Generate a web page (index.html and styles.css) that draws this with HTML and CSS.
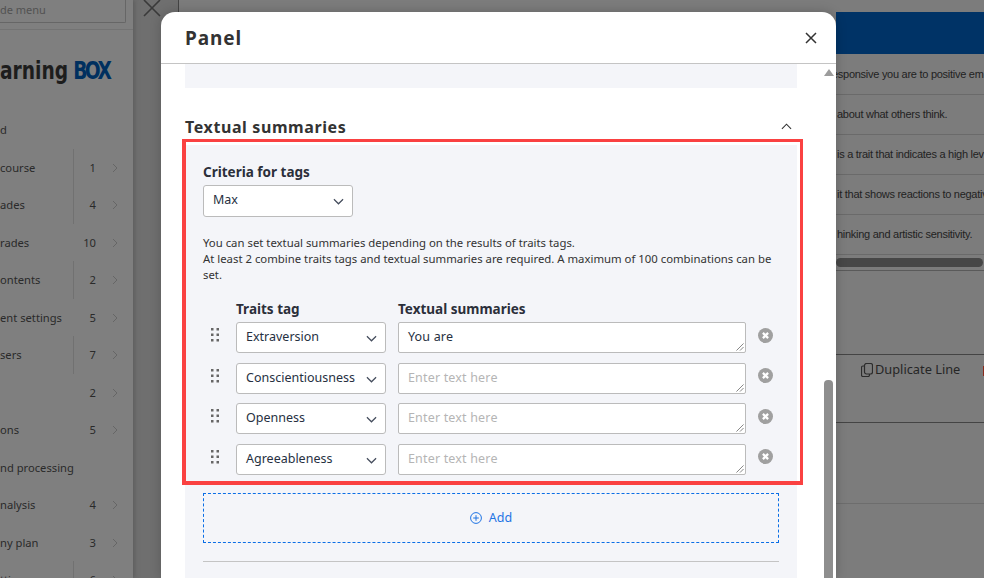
FILE: index.html
```html
<!DOCTYPE html>
<html>

<head>
  <meta charset="utf-8" />
  <title>Panel</title>
  <link rel="stylesheet" href="styles.css">
</head>

<body>
  <div class="page">
    <div class="sidebar">
      <div class="search-wrap">
        <div class="search">de menu</div>
      </div>
      <div class="logo"><div class="logo-text">arning<span class="logo-blue">BOX</span></div></div>
      <div class="nav">
        <div class="nav-row"><div class="nav-label">d</div></div>
        <div class="nav-row line"><div class="nav-label">course</div><div class="nav-count">1</div><svg class="nav-arrow" viewBox="0 0 6 10"><path d="M1 1l4 4-4 4"/></svg></div>
        <div class="nav-row line"><div class="nav-label">ades</div><div class="nav-count">4</div><svg class="nav-arrow" viewBox="0 0 6 10"><path d="M1 1l4 4-4 4"/></svg></div>
        <div class="nav-row"><div class="nav-label">rades</div><div class="nav-count">10</div><svg class="nav-arrow" viewBox="0 0 6 10"><path d="M1 1l4 4-4 4"/></svg></div>
        <div class="nav-row line"><div class="nav-label">ontents</div><div class="nav-count">2</div><svg class="nav-arrow" viewBox="0 0 6 10"><path d="M1 1l4 4-4 4"/></svg></div>
        <div class="nav-row"><div class="nav-label">ent settings</div><div class="nav-count">5</div><svg class="nav-arrow" viewBox="0 0 6 10"><path d="M1 1l4 4-4 4"/></svg></div>
        <div class="nav-row line"><div class="nav-label">sers</div><div class="nav-count">7</div><svg class="nav-arrow" viewBox="0 0 6 10"><path d="M1 1l4 4-4 4"/></svg></div>
        <div class="nav-row"><div class="nav-label"></div><div class="nav-count">2</div><svg class="nav-arrow" viewBox="0 0 6 10"><path d="M1 1l4 4-4 4"/></svg></div>
        <div class="nav-row"><div class="nav-label">ons</div><div class="nav-count">5</div><svg class="nav-arrow" viewBox="0 0 6 10"><path d="M1 1l4 4-4 4"/></svg></div>
        <div class="nav-row"><div class="nav-label">nd processing</div></div>
        <div class="nav-row"><div class="nav-label">nalysis</div><div class="nav-count">4</div><svg class="nav-arrow" viewBox="0 0 6 10"><path d="M1 1l4 4-4 4"/></svg></div>
        <div class="nav-row"><div class="nav-label">ny plan</div><div class="nav-count">3</div><svg class="nav-arrow" viewBox="0 0 6 10"><path d="M1 1l4 4-4 4"/></svg></div>
        <div class="nav-row line"><div class="nav-label">tti</div><div class="nav-count">6</div><svg class="nav-arrow" viewBox="0 0 6 10"><path d="M1 1l4 4-4 4"/></svg></div>
      </div>
    </div>

    <div class="gap">
      <svg class="big-x" viewBox="0 0 20 20"><path d="M2 1l16 16M18 1L2 17"/></svg>
    </div>

    <div class="main">
      <div class="main-inner">
        <div class="main-top"></div>
        <div class="blue-bar"></div>
        <div class="trait-rows">
          <div class="trait-row clip-e">esponsive you are to positive em</div>
          <div class="trait-row">about what others think.</div>
          <div class="trait-row">is a trait that indicates a high lev</div>
          <div class="trait-row">it that shows reactions to negativ</div>
          <div class="trait-row">hinking and artistic sensitivity.</div>
        </div>
        <div class="h-scroll"><div class="h-thumb"></div></div>
        <div class="spacer"></div>
        <div class="actions-row">
          <svg class="dup-icon" viewBox="0 0 12 14"><path d="M3.500 3H2a1.500 1.500 0 0 0-1.500 1.500V12A1.500 1.500 0 0 0 2 13.500h5A1.500 1.500 0 0 0 8.500 12v-1"/><rect x="3.500" y="0.500" width="8" height="10.500" rx="2"/></svg>
          <span class="dup-text">Duplicate Line</span>
          <svg class="trash-icon" viewBox="0 0 10 14"><path d="M1 3h8v10H1z"/></svg>
        </div>
        <div class="empty-row"></div>
      </div>
    </div>
  </div>

  <div class="modal">
    <div class="modal-head">
      <div class="modal-title">Panel</div>
      <svg class="modal-close" viewBox="0 0 12 12"><path d="M1 1l10 10M11 1L1 11"/></svg>
    </div>
    <div class="modal-body">
      <div class="modal-scroll">
        <div class="top-block"></div>
        <div class="section-head">
          <h2>Textual summaries</h2>
          <svg class="collapse" viewBox="0 0 12 7"><path d="M1 6l5-5 5 5"/></svg>
        </div>
        <div class="gray-block">
          <div class="field-label">Criteria for tags</div>
          <div class="select select-criteria">Max<svg class="caret" viewBox="0 0 12 7"><path d="M1 1l5 5 5-5"/></svg></div>
          <p class="help">You can set textual summaries depending on the results of traits tags.<br>At least 2 combine traits tags and textual summaries are required. A maximum of 100 combinations can be set.</p>
          <div class="tags-grid">
            <div></div>
            <div class="col-head">Traits tag</div>
            <div class="col-head col-text">Textual summaries</div>
            <div></div>

            <svg class="drag" viewBox="0 0 8 14"><path d="M0 0h2.500v2.500H0zM5.500 0H8v2.500H5.500zM0 5.500h2.500V8H0zM5.500 5.500H8V8H5.500zM0 11h2.500v2.500H0zM5.500 11H8v2.500H5.500z"/></svg>
            <div class="select">Extraversion<svg class="caret" viewBox="0 0 12 7"><path d="M1 1l5 5 5-5"/></svg></div>
            <div class="textarea">You are<svg class="grip" viewBox="0 0 9 9"><path d="M8.500 .5l-8 8M8.500 4.500l-4 4"/></svg></div>
            <svg class="remove" viewBox="0 0 16 16"><circle cx="8" cy="8" r="8"/><path d="M5.200 5.200l5.600 5.600M10.800 5.200l-5.600 5.600"/></svg>

            <svg class="drag" viewBox="0 0 8 14"><path d="M0 0h2.500v2.500H0zM5.500 0H8v2.500H5.500zM0 5.500h2.500V8H0zM5.500 5.500H8V8H5.500zM0 11h2.500v2.500H0zM5.500 11H8v2.500H5.500z"/></svg>
            <div class="select">Conscientiousness<svg class="caret" viewBox="0 0 12 7"><path d="M1 1l5 5 5-5"/></svg></div>
            <div class="textarea empty">Enter text here<svg class="grip" viewBox="0 0 9 9"><path d="M8.500 .5l-8 8M8.500 4.500l-4 4"/></svg></div>
            <svg class="remove" viewBox="0 0 16 16"><circle cx="8" cy="8" r="8"/><path d="M5.200 5.200l5.600 5.600M10.800 5.200l-5.600 5.600"/></svg>

            <svg class="drag" viewBox="0 0 8 14"><path d="M0 0h2.500v2.500H0zM5.500 0H8v2.500H5.500zM0 5.500h2.500V8H0zM5.500 5.500H8V8H5.500zM0 11h2.500v2.500H0zM5.500 11H8v2.500H5.500z"/></svg>
            <div class="select">Openness<svg class="caret" viewBox="0 0 12 7"><path d="M1 1l5 5 5-5"/></svg></div>
            <div class="textarea empty">Enter text here<svg class="grip" viewBox="0 0 9 9"><path d="M8.500 .5l-8 8M8.500 4.500l-4 4"/></svg></div>
            <svg class="remove" viewBox="0 0 16 16"><circle cx="8" cy="8" r="8"/><path d="M5.200 5.200l5.600 5.600M10.800 5.200l-5.600 5.600"/></svg>

            <svg class="drag" viewBox="0 0 8 14"><path d="M0 0h2.500v2.500H0zM5.500 0H8v2.500H5.500zM0 5.500h2.500V8H0zM5.500 5.500H8V8H5.500zM0 11h2.500v2.500H0zM5.500 11H8v2.500H5.500z"/></svg>
            <div class="select">Agreeableness<svg class="caret" viewBox="0 0 12 7"><path d="M1 1l5 5 5-5"/></svg></div>
            <div class="textarea empty">Enter text here<svg class="grip" viewBox="0 0 9 9"><path d="M8.500 .5l-8 8M8.500 4.500l-4 4"/></svg></div>
            <svg class="remove" viewBox="0 0 16 16"><circle cx="8" cy="8" r="8"/><path d="M5.200 5.200l5.600 5.600M10.800 5.200l-5.600 5.600"/></svg>
          </div>
          <div class="add-box">
            <svg class="add-icon" viewBox="0 0 12 12"><circle cx="6" cy="6" r="5.400"/><path d="M6 3.200v5.600M3.200 6h5.600"/></svg>
            <span>Add</span>
          </div>
          <div class="divider"></div>
        </div>
      </div>
      <div class="v-scroll">
        <svg class="v-up" viewBox="0 0 10 7"><path d="M5 0l5 7H0z"/></svg>
        <div class="v-thumb"></div>
      </div>
    </div>
    <div class="highlight"></div>
  </div>
</body>

</html>
```

FILE: styles.css
```css
html,
body {
  margin: 0;
  padding: 0;
  height: 100%;
  overflow: hidden;
}

body {
  font-family: "Noto Sans", sans-serif;
  color: #2c2c2c;
  background: #6f6f6f;
}

.page {
  display: flex;
  width: 984px;
  height: 578px;
  overflow: hidden;
}

/* left menu behind the overlay */
.sidebar {
  width: 133px;
  flex: none;
  background: #7f7f7f;
  box-shadow: 2px 0 4px #5f5f5f;
  font-size: 11.2px;
}

.search-wrap {
  height: 30px;
  box-sizing: border-box;
  padding-right: 7px;
  border-bottom: 1px solid #737373;
}

.search {
  height: 23px;
  box-sizing: border-box;
  border: 1px solid #666;
  border-top: 0;
  border-left: 0;
  border-radius: 0 0 2px 0;
  color: #525252;
  font-size: 11px;
  line-height: 20px;
}

.logo {
  height: 81px;
  box-sizing: border-box;
  padding-top: 25px;
  font-family: "DejaVu Sans Condensed", "DejaVu Sans", sans-serif;
  font-weight: bold;
  font-size: 25px;
  line-height: 32px;
  color: #1d1d1d;
  white-space: nowrap;
}

.logo-text {
  transform: scaleX(.83);
  transform-origin: left center;
}

.logo-blue {
  color: #00305f;
  margin-left: 6px;
  letter-spacing: -3px;
}

.nav-row {
  display: flex;
  align-items: stretch;
  height: 37.5px;
  line-height: 37.5px;
  white-space: nowrap;
  color: #2a2a2a;
}

.nav-label {
  width: 73px;
  flex: none;
  border-right: 1px solid transparent;
}

.nav-row.line .nav-label {
  border-right-color: #717171;
}

.nav-count {
  width: 22px;
  flex: none;
  text-align: right;
}

.nav-arrow {
  width: 6px;
  height: 10px;
  margin: 14px 0 0 16px;
  fill: none;
  stroke: #666;
}

.gap {
  width: 45px;
  flex: none;
  position: relative;
}

.big-x {
  position: absolute;
  left: 9px;
  top: -1px;
  width: 20px;
  height: 20px;
  fill: none;
  stroke: #3a3a3a;
  stroke-width: 1.600;
}

/* right content, mostly covered by the modal */
.main {
  flex: 1;
  min-width: 0;
  background: #7c7c7c;
  border-left: 1px solid #444;
  box-sizing: border-box;
  overflow: hidden;
  display: flex;
  justify-content: flex-end;
}

.main-inner {
  width: 148px;
  flex: none;
  font-family: "Liberation Sans", sans-serif;
  font-size: 11px;
  letter-spacing: -.27px;
  color: #222;
  white-space: nowrap;
  overflow: hidden;
}

.main-top {
  height: 12px;
}

.blue-bar {
  height: 42px;
  background: #003366;
}

.trait-rows {
  padding-top: 1px;
}

.trait-row {
  height: 40px;
  line-height: 39px;
  padding-left: 1px;
  box-sizing: border-box;
  border-bottom: 1px solid #6a6a6a;
}

.clip-e {
  text-indent: -5px;
}

.h-scroll {
  height: 16px;
  border-bottom: 1px solid #5a5a5a;
  padding-top: 3px;
  box-sizing: border-box;
}

.h-thumb {
  height: 9px;
  width: 147px;
  background: #474747;
  border-radius: 5px;
}

.spacer {
  height: 83px;
}

.actions-row {
  display: flex;
  align-items: flex-start;
  height: 67px;
  padding-left: 25px;
  border-top: 1px solid #444;
  font-family: "Noto Sans", sans-serif;
  font-size: 12.800px;
  letter-spacing: 0;
  line-height: 28px;
  color: #262626;
}

.dup-icon {
  flex: none;
  width: 12px;
  height: 14px;
  margin: 8px 2px 0 0;
  fill: none;
  stroke: #2c2c2c;
  stroke-width: 1.200;
}

.dup-text {
  flex: none;
}

.trash-icon {
  flex: none;
  width: 10px;
  height: 14px;
  margin: 8px 0 0 22px;
  fill: #8a2a1c;
}

.empty-row {
  height: 80px;
  border-top: 1px solid #444;
  border-bottom: 1px solid #6d6d6d;
}

/* modal */
.modal {
  position: absolute;
  left: 161px;
  top: 12px;
  width: 675px;
  height: 566px;
  background: #fff;
  border-radius: 14px 14px 0 0;
  box-shadow: 0 0 12px rgba(0, 0, 0, .2);
  overflow: hidden;
}

.modal-head {
  display: flex;
  align-items: center;
  justify-content: space-between;
  height: 51px;
  padding: 0 19px 0 24px;
  border-bottom: 1px solid #c4c4c4;
}

.modal-title {
  font-size: 19px;
  font-weight: bold;
  letter-spacing: .9px;
  color: #333;
}

.modal-close {
  width: 12px;
  height: 12px;
  fill: none;
  stroke: #333;
  stroke-width: 1.500;
}

.modal-body {
  display: flex;
  height: 514px;
}

.modal-scroll {
  width: 612px;
  margin-left: 24px;
  flex: none;
}

.top-block {
  height: 24px;
  background: #f4f5f9;
}

.section-head {
  display: flex;
  justify-content: space-between;
  align-items: center;
  height: 57px;
  box-sizing: border-box;
  padding: 21px 5px 0 0;
}

.section-head h2 {
  margin: 0;
  font-size: 16px;
  font-weight: bold;
  letter-spacing: .6px;
  color: #333;
}

.collapse {
  width: 11px;
  height: 7px;
  margin-top: -2px;
  fill: none;
  stroke: #333;
  stroke-width: 1.200;
}

.gray-block {
  background: #f4f5f9;
  padding: 18px 18px 0;
  height: 460px;
  box-sizing: border-box;
  font-size: 12px;
}

.field-label {
  font-size: 13.500px;
  font-weight: bold;
  line-height: 18px;
  height: 22px;
  color: #2b2f3a;
}

.select {
  position: relative;
  box-sizing: border-box;
  height: 31px;
  line-height: 27px;
  padding-left: 9px;
  background: #fff;
  border: 1px solid #bbb;
  border-radius: 3px;
  font-size: 12.500px;
  color: #26303f;
  white-space: nowrap;
}

.select-criteria {
  width: 150px;
  height: 32px;
}

.caret {
  position: absolute;
  right: 8px;
  top: 12px;
  width: 11px;
  height: 7px;
  fill: none;
  stroke: #444c5c;
  stroke-width: 1.300;
}

.help {
  margin: 18px 0 0;
  font-size: 11.350px;
  line-height: 16px;
  color: #333;
}

.tags-grid {
  display: grid;
  grid-template-columns: 33px 150px 360px 24px;
  margin-top: 17px;
}

.col-head {
  font-size: 13.500px;
  font-weight: bold;
  height: 22px;
  line-height: 18px;
  color: #2b2f3a;
}

.col-text {
  margin-left: 12px;
}

.drag {
  width: 8px;
  height: 14px;
  margin: 6px 0 0 8px;
  fill: #666;
}

.textarea {
  position: relative;
  box-sizing: border-box;
  height: 31px;
  margin: 0 0 9.670px 12px;
  padding-left: 9px;
  line-height: 27px;
  background: #fff;
  border: 1px solid #bbb;
  border-radius: 2px;
  font-size: 12.500px;
  letter-spacing: .17px;
  color: #26303f;
}

.tags-grid .select {
  margin-bottom: 9.670px;
}

.textarea.empty {
  color: #b5b5b5;
}

.grip {
  position: absolute;
  right: 1px;
  bottom: 1px;
  width: 8px;
  height: 8px;
  fill: none;
  stroke: #555;
  stroke-width: 0.800;
}

.remove {
  width: 15px;
  height: 15px;
  margin: 5.500px 0 0 12px;
}

.remove circle {
  fill: #a0a0a0;
}

.remove path {
  stroke: #fff;
  stroke-width: 2.400;
}

.add-box {
  display: flex;
  align-items: center;
  justify-content: center;
  gap: 7px;
  box-sizing: border-box;
  width: 576px;
  height: 50px;
  margin-top: 8px;
  border: 1px dashed #0a6ee6;
  color: #1f74e4;
  font-size: 12.500px;
}

.add-icon {
  width: 12px;
  height: 12px;
  fill: none;
  stroke: #1f74e4;
}

.divider {
  width: 576px;
  height: 1px;
  margin-top: 18px;
  background: #c4c4c4;
}

.v-scroll {
  width: 9px;
  margin-left: 27px;
  position: relative;
}

.v-up {
  position: absolute;
  left: 0;
  top: 5px;
  width: 10px;
  height: 7px;
  fill: #9c9c9c;
}

.v-thumb {
  position: absolute;
  left: 0;
  top: 316px;
  width: 9px;
  height: 200px;
  background: #8e8e8e;
  border-radius: 4px 4px 0 0;
}

/* red annotation frame drawn over the screenshot */
.highlight {
  position: absolute;
  left: 21px;
  top: 127px;
  width: 621px;
  height: 346px;
  box-sizing: border-box;
  border: solid #fa4141;
  border-width: 3px 3px 4px 4px;
}
```
